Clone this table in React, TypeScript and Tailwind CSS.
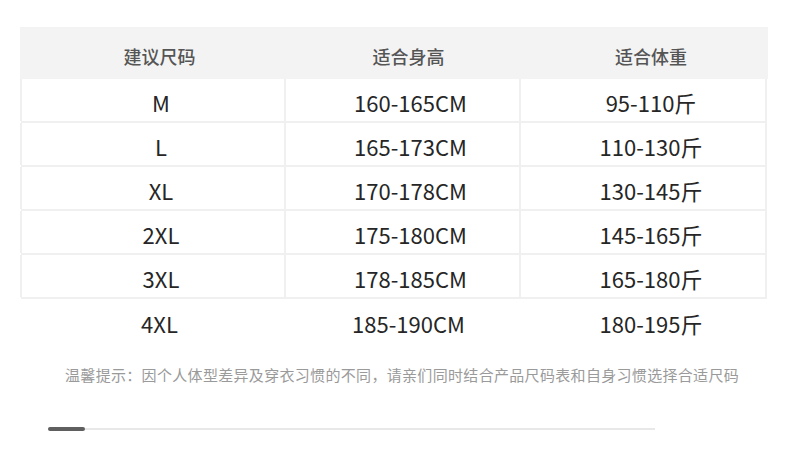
import React from "react";

const rows = [
  ["M", "160-165CM", "95-110斤"],
  ["L", "165-173CM", "110-130斤"],
  ["XL", "170-178CM", "130-145斤"],
  ["2XL", "175-180CM", "145-165斤"],
  ["3XL", "178-185CM", "165-180斤"],
  ["4XL", "185-190CM", "180-195斤"],
];

export default function App() {
  return (
    <div
      className="w-[790px] h-[468px] bg-white overflow-hidden pt-[27px]"
      style={{ fontFamily: '"Noto Sans CJK SC", "Noto Sans", sans-serif' }}
    >
      <div className="ml-[20px] w-[748px]">
        <div className="grid grid-cols-[263px_235px_1fr] h-[52px] bg-[#f3f3f3] text-[18px] font-medium text-[#555] items-center">
          <div className="text-center pl-[16px] pt-[6px]">建议尺码</div>
          <div className="text-center pl-[16px] pt-[6px]">适合身高</div>
          <div className="text-center pl-[16px] pt-[6px]">适合体重</div>
        </div>
        {rows.map((r, i) => {
          const last = i === rows.length - 1;
          return (
            <div
              key={r[0]}
              className={
                last
                  ? "grid grid-cols-[263px_235px_1fr] h-[45px] items-center text-[22px] text-[#262626]"
                  : "grid grid-cols-[263px_235px_1fr] h-[44px] items-center text-[22px] text-[#262626] border-b-2 border-[#f0f0f0] mr-[1px] ml-[1px]"
              }
            >
              <div
                className={
                  last
                    ? "h-full flex items-center justify-center pl-[16px] pt-[4px]"
                    : "h-full flex items-center justify-center pl-[16px] pt-[4px] border-l-2 border-[#f0f0f0] -ml-[1px]"
                }
              >
                {r[0]}
              </div>
              <div
                className={
                  last
                    ? "h-full flex items-center justify-center pl-[16px] pt-[4px]"
                    : "h-full flex items-center justify-center pl-[16px] pt-[4px] border-l-2 border-[#f0f0f0]"
                }
              >
                {r[1]}
              </div>
              <div
                className={
                  last
                    ? "h-full flex items-center justify-center pl-[16px] pt-[4px]"
                    : "h-full flex items-center justify-center pl-[16px] pt-[4px] border-l-2 border-r-2 border-[#f0f0f0]"
                }
              >
                {r[2]}
              </div>
            </div>
          );
        })}
      </div>
      <div className="mt-[19px] ml-[65px] text-[15px] tracking-[0.32px] text-[#9a9a9a] leading-[24px] whitespace-nowrap">
        温馨提示：因个人体型差异及穿衣习惯的不同，请亲们同时结合产品尺码表和自身习惯选择合适尺码
      </div>
      <div className="mt-[40px] ml-[48px] w-[607px] h-[4px] relative flex items-center">
        <div className="w-full h-[2px] bg-[#e8e8e8]" />
        <div className="absolute left-0 top-0 w-[37px] h-[4px] rounded-full bg-[#5f5f5f]" />
      </div>
    </div>
  );
}
